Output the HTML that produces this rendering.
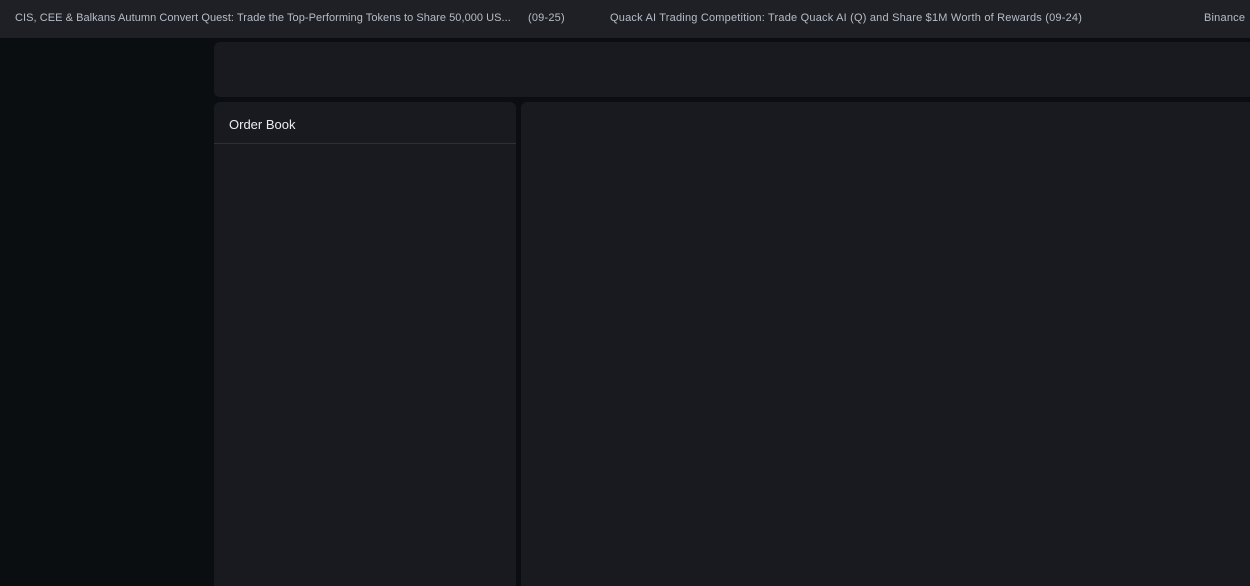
<!DOCTYPE html>
<html style="height:586px;overflow:hidden"><head><style>
body{margin:0;width:1250px;height:586px;background:#0b0e11;position:relative;overflow:hidden;font-family:"Liberation Sans",sans-serif}
.top{position:absolute;left:0;top:0;width:1250px;height:38px;background:#1e2026;color:#b7bdc6;font-size:11px;white-space:nowrap;letter-spacing:0.2px}
.top span{position:absolute;top:12px}
.p{position:absolute;background:#181a20;border-radius:6px}
</style></head><body>
<div class="top">
<span style="left:15px;letter-spacing:0.05px">CIS, CEE &amp; Balkans Autumn Convert Quest: Trade the Top-Performing Tokens to Share 50,000 US...</span>
<span style="left:528px">(09-25)</span>
<span style="left:610px">Quack AI Trading Competition: Trade Quack AI (Q) and Share $1M Worth of Rewards (09-24)</span>
<span style="left:1204px">Binance</span>
</div>
<div class="p" style="left:214px;top:42px;width:1050px;height:55px"></div>
<div class="p" style="left:214px;top:102px;width:302px;height:500px">
<div style="position:absolute;left:15px;top:15px;color:#eaecef;font-size:13px">Order Book</div>
<div style="position:absolute;left:0;top:41px;width:302px;height:1px;background:#2b3139"></div>
</div>
<div class="p" style="left:521px;top:102px;width:750px;height:500px"></div>
</body></html>
